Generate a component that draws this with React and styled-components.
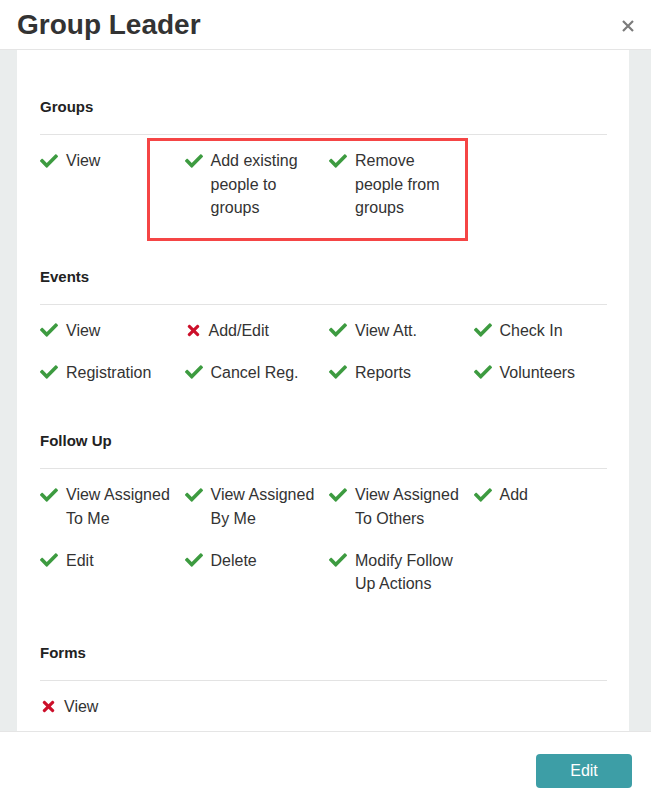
import React from 'react';
import styled, { createGlobalStyle } from 'styled-components';
import { FaCheck, FaTimes } from 'react-icons/fa';

const GlobalStyle = createGlobalStyle`
  html, body {
    margin: 0;
    padding: 0;
    background: #fff;
  }
  body {
    font-family: "Liberation Sans", Arial, sans-serif;
    color: #333;
  }
`;

const Modal = styled.div`
  display: flex;
  flex-direction: column;
  width: 651px;
  height: 802px;
  overflow: hidden;
`;

const Header = styled.header`
  display: flex;
  align-items: center;
  justify-content: space-between;
  height: 49px;
  padding: 0 17px;
  border-bottom: 1px solid #e5e5e5;
  flex-shrink: 0;
`;

const Title = styled.h1`
  margin: 0;
  font-size: 28px;
  font-weight: bold;
  color: #333;
  line-height: 1;
`;

const CloseButton = styled.button`
  display: flex;
  align-items: center;
  justify-content: center;
  width: 16px;
  height: 16px;
  padding: 0;
  margin-right: -2px;
  margin-top: 2px;
  border: none;
  background: none;
  cursor: pointer;
`;

const Body = styled.div`
  flex: 1;
  min-height: 0;
  display: flex;
  background: #eaeded;
  padding: 0 22px 0 17px;
  overflow: hidden;
`;

const Panel = styled.div`
  flex: 1;
  min-width: 0;
  background: #fff;
  padding: 47px 22px 0 23px;
`;

const Section = styled.section`
  margin-bottom: 47px;
`;

const SectionTitle = styled.h3`
  margin: 0;
  font-size: 15px;
  font-weight: bold;
  line-height: 20px;
  color: #222;
  padding-bottom: 17px;
  border-bottom: 1px solid #e3e3e3;
`;

const Grid = styled.div`
  position: relative;
  display: grid;
  grid-template-columns: repeat(4, 144.5px);
  row-gap: 18.5px;
  padding-top: 14px;
`;

const Item = styled.div`
  display: flex;
  align-items: flex-start;
  gap: 8px;
  padding-right: 10px;
  font-size: 16px;
  line-height: 23.5px;
  color: #333;
`;

const IconBox = styled.span`
  display: flex;
  align-items: center;
  flex-shrink: 0;
  width: ${(p) => (p.$allowed ? '18px' : '16px')};
  height: 23.5px;
  padding-left: ${(p) => (p.$allowed ? '0' : '1px')};
  box-sizing: border-box;
  color: ${(p) => (p.$allowed ? '#3d9b40' : '#cc0f2a')};
`;

const Highlight = styled.div`
  position: absolute;
  top: 3px;
  left: 107px;
  width: 321px;
  height: 103px;
  box-sizing: border-box;
  border: 3px solid #f54545;
  pointer-events: none;
`;

const Footer = styled.footer`
  display: flex;
  justify-content: flex-end;
  align-items: flex-start;
  height: 71px;
  padding: 22px 19px 0 0;
  box-sizing: border-box;
  border-top: 1px solid #e5e5e5;
  flex-shrink: 0;
`;

const EditButton = styled.button`
  width: 96px;
  height: 34px;
  border: none;
  border-radius: 4px;
  background: #3d9ea6;
  color: #fff;
  font-family: "Liberation Sans", Arial, sans-serif;
  font-size: 16px;
  cursor: pointer;
`;

const sections = [
  {
    title: 'Groups',
    highlight: true,
    items: [
      ['View', true],
      ['Add existing people to groups', true],
      ['Remove people from groups', true],
    ],
  },
  {
    title: 'Events',
    items: [
      ['View', true],
      ['Add/Edit', false],
      ['View Att.', true],
      ['Check In', true],
      ['Registration', true],
      ['Cancel Reg.', true],
      ['Reports', true],
      ['Volunteers', true],
    ],
  },
  {
    title: 'Follow Up',
    items: [
      ['View Assigned To Me', true],
      ['View Assigned By Me', true],
      ['View Assigned To Others', true],
      ['Add', true],
      ['Edit', true],
      ['Delete', true],
      ['Modify Follow Up Actions', true],
    ],
  },
  {
    title: 'Forms',
    items: [['View', false]],
  },
];

const Permission = ({ label, allowed }) => (
  <Item>
    <IconBox $allowed={allowed}>
      {allowed ? <FaCheck size={18} /> : <FaTimes size={17} />}
    </IconBox>
    <span>{label}</span>
  </Item>
);

const App = () => (
  <>
    <GlobalStyle />
    <Modal>
      <Header>
        <Title>Group Leader</Title>
        <CloseButton aria-label="Close">
          <svg width="12" height="12" viewBox="0 0 12 12">
            <path d="M1 1L11 11M11 1L1 11" stroke="#7b7b7b" strokeWidth="2.2" />
          </svg>
        </CloseButton>
      </Header>
      <Body>
        <Panel>
          {sections.map((s) => (
            <Section key={s.title}>
              <SectionTitle>{s.title}</SectionTitle>
              <Grid>
                {s.items.map(([label, allowed]) => (
                  <Permission key={label} label={label} allowed={allowed} />
                ))}
                {s.highlight && <Highlight />}
              </Grid>
            </Section>
          ))}
        </Panel>
      </Body>
      <Footer>
        <EditButton>Edit</EditButton>
      </Footer>
    </Modal>
  </>
);

export default App;
